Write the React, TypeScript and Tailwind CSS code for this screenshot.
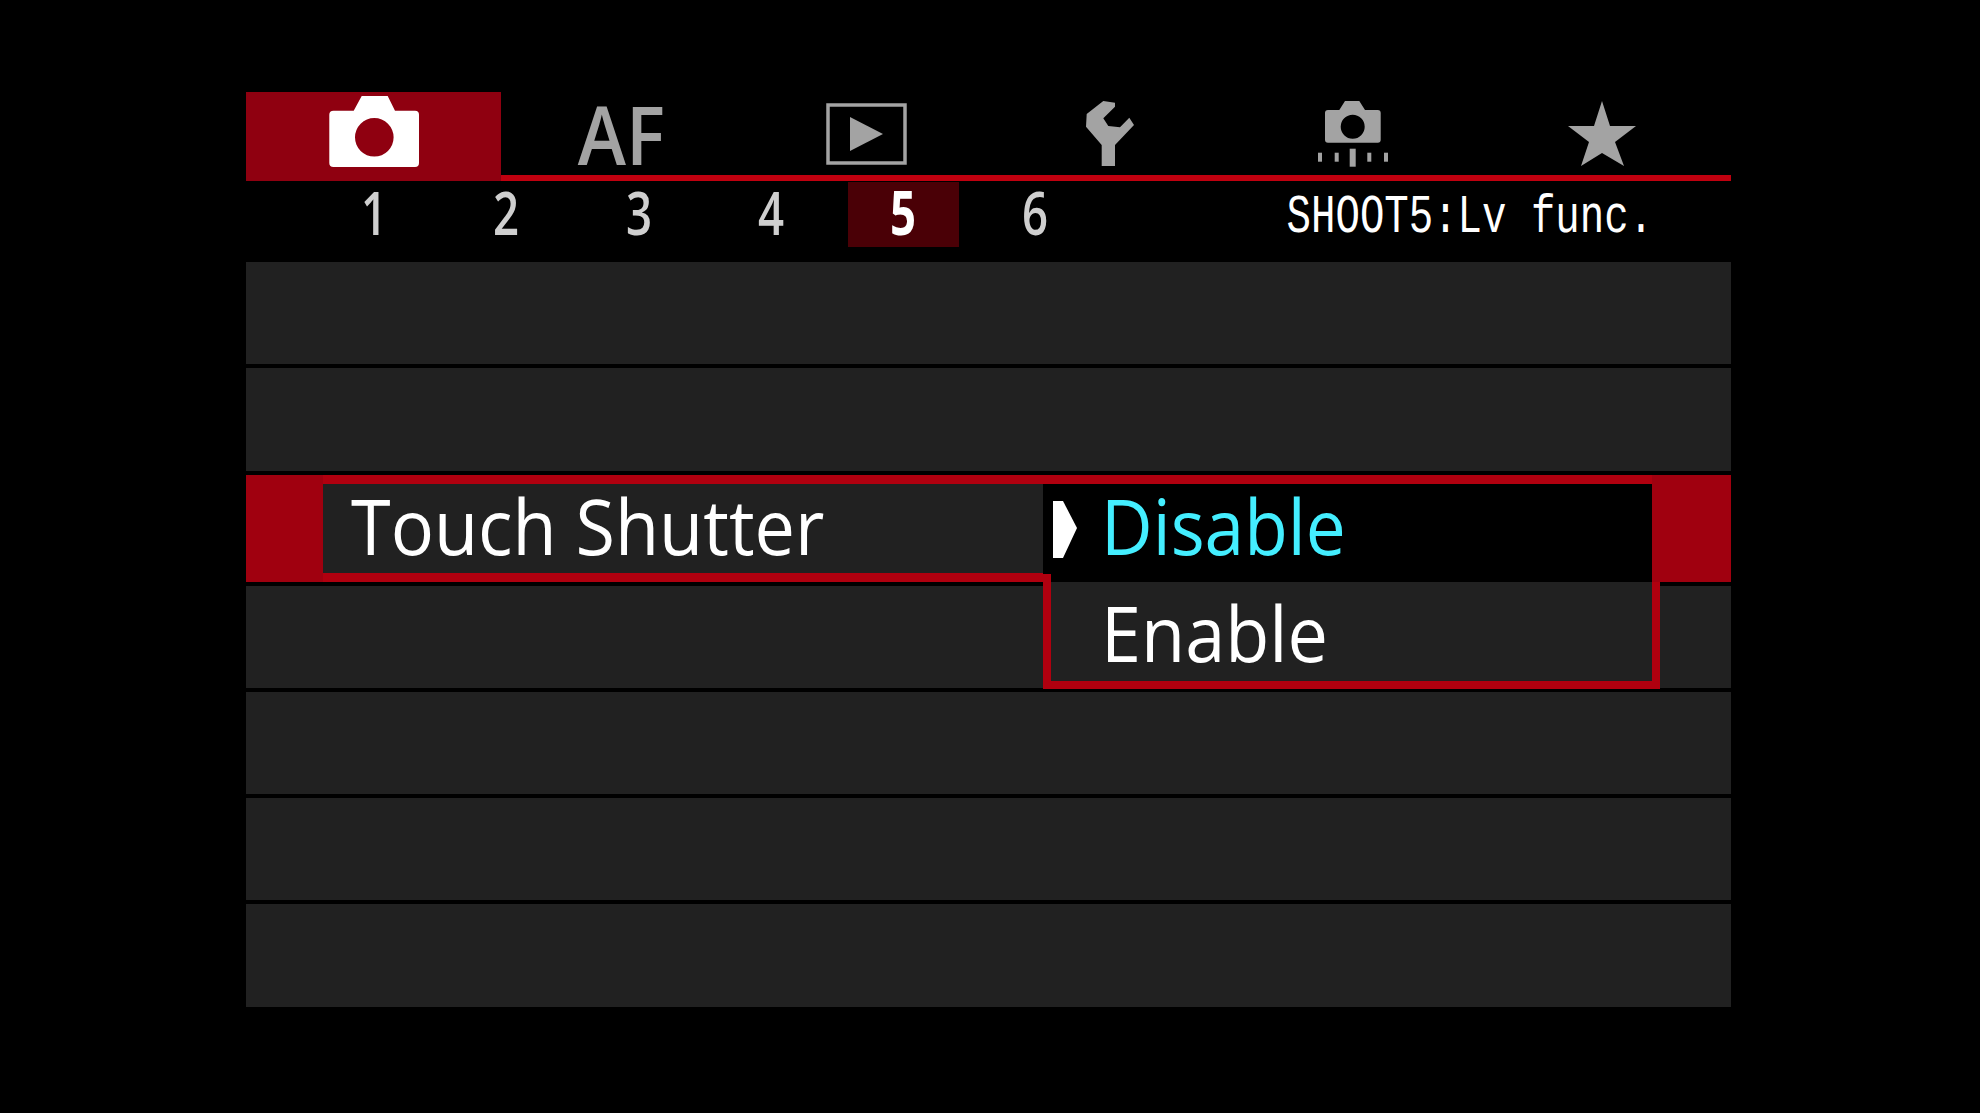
/**
 * Camera menu screen: SHOOT5 live view functions, Touch Shutter dropdown open.
 */
const SANS = "font-['Open_Sans',sans-serif]";

const digits = ['1', '2', '3', '4', '5', '6'];

function CameraIcon() {
  return (
    <svg width="90" height="71" viewBox="8 6 90 71" fill="#ffffff">
      <path
        fillRule="evenodd"
        d="M12.5 20.7H32.7L40.7 6H66.7L74 20.7H94Q98 20.7 98 24.7V73Q98 77 94 77H12.5Q8.3 77 8.3 73V24.7Q8.3 20.7 12.5 20.7ZM53.3 28A19.3 19.3 0 1 0 53.3 66.6A19.3 19.3 0 1 0 53.3 28Z"
      />
    </svg>
  );
}

function PlayIcon() {
  return (
    <svg width="81" height="62" viewBox="0 0 81 62">
      <rect x="2" y="2" width="77" height="58" fill="none" stroke="#a3a3a3" strokeWidth="3.5" />
      <path d="M24 14L57 31L24 48Z" fill="#a3a3a3" />
    </svg>
  );
}

function WrenchIcon() {
  return (
    <svg width="80" height="65" viewBox="0 11 80 65" fill="#a3a3a3">
      <path d="M45 12.7L33.3 11L16.7 24L16 36.7L31.7 55V76H45V55L64 35L59.3 27.7L50 37.3L38.3 36L33.3 28.3L45 16.7Z" />
    </svg>
  );
}

function ShootLiveIcon() {
  return (
    <svg width="70" height="66" viewBox="8 11 70 66" fill="#a3a3a3">
      <path
        fillRule="evenodd"
        d="M18 20H29.3L35 11H49.3L55 20H67.7Q70.7 20 70.7 23V49.7Q70.7 52.7 67.7 52.7H18Q15 52.7 15 49.7V23Q15 20 18 20ZM42.7 24.7A12 12 0 1 0 42.7 48.7A12 12 0 1 0 42.7 24.7Z"
      />
      <rect x="8" y="62.7" width="4" height="9" />
      <rect x="24.7" y="62.7" width="4" height="9" />
      <rect x="39.7" y="58.7" width="6" height="18" />
      <rect x="57.3" y="62.7" width="4" height="9" />
      <rect x="74" y="62.7" width="4" height="9" />
    </svg>
  );
}

function StarIcon() {
  return (
    <svg width="68" height="65" viewBox="0 0 68 65" fill="#a3a3a3">
      <path d="M34 0L42 25H68L47 41L56 65L34 52L13 65L21 41L0 25H26Z" />
    </svg>
  );
}

function TabBar() {
  return (
    <div className="flex">
      <div className="flex h-[89px] w-[255px] items-center justify-center bg-[#8f0010] pb-[10px]">
        <CameraIcon />
      </div>
      <div className="flex h-[89px] w-[240px] items-center justify-center border-b-[6px] border-[#c0000f]">
        <span className={`${SANS} scale-x-[0.9] text-[81px] leading-none font-semibold text-[#a3a3a3]`}>AF</span>
      </div>
      <div className="flex h-[89px] w-[250px] items-center justify-center border-b-[6px] border-[#c0000f]">
        <PlayIcon />
      </div>
      <div className="flex h-[89px] w-[238px] items-center justify-center border-b-[6px] border-[#c0000f]">
        <WrenchIcon />
      </div>
      <div className="flex h-[89px] w-[248px] items-center justify-center border-b-[6px] border-[#c0000f]">
        <ShootLiveIcon />
      </div>
      <div className="flex h-[89px] w-[254px] items-center justify-center border-b-[6px] border-[#c0000f] pr-1">
        <StarIcon />
      </div>
    </div>
  );
}

function SubTabs() {
  return (
    <div className="flex h-[81px] items-start justify-between pr-[78px] pl-[62px]">
      <div className="mt-px flex">
        {digits.map((d) => (
          <div key={d} className="flex h-[65px] w-[132.3px] justify-center">
            <div
              className={`flex h-[65px] w-[111px] items-center justify-center ${d === '5' ? 'bg-[#4a0006]' : ''}`}
            >
              <span
                className={`${SANS} mb-[5px] scale-x-[0.76] text-[60px] leading-none ${
                  d === '5' ? 'font-bold text-white' : 'font-semibold text-[#cfcfcf]'
                }`}
              >
                {d}
              </span>
            </div>
          </div>
        ))}
      </div>
      <span className="mt-[4px] origin-right scale-x-[0.754] font-['Liberation_Mono',monospace] text-[54px] leading-[65px] whitespace-nowrap text-white">
        SHOOT5:Lv func.
      </span>
    </div>
  );
}

function EmptyRow() {
  return <div className="h-[102.25px] bg-[#212121]" />;
}

function TouchShutterRow() {
  return (
    <div className="relative flex h-[107px] bg-[#b0000f]">
      <div className="w-[77px] bg-[#a0000f]" />
      <div className="my-[9px] flex w-[720px] items-center bg-[#212121] pb-[6px] pl-[28px]">
        <span
          className={`${SANS} origin-left scale-x-[0.935] text-[77px] leading-none font-medium whitespace-nowrap text-white`}
        >
          Touch Shutter
        </span>
      </div>
      <div className="mt-[9px] flex h-[100px] w-[609px] items-center bg-black pl-[10px]">
        <svg width="24" height="57" viewBox="0 0 24 57" fill="#ffffff" className="mb-[8px]">
          <path d="M0 0H10L24 27L10 57H0Z" />
        </svg>
        <span
          className={`${SANS} mb-[16px] ml-[24px] origin-left scale-x-[0.925] text-[77px] leading-none font-medium text-[#44eeff]`}
        >
          Disable
        </span>
      </div>
      <div className="flex-1 bg-[#a0000f]" />

      {/* Dropdown's second option hangs over the row below */}
      <div className="absolute top-[107px] left-[797px] flex h-[107px] w-[617px] items-center border-x-[8px] border-b-[8px] border-[#b0000f] bg-[#212121] pl-[50px]">
        <span
          className={`${SANS} mt-[3px] origin-left scale-x-[0.935] text-[77px] leading-none font-medium text-white`}
        >
          Enable
        </span>
      </div>
      <div className="absolute top-[99px] left-[797px] h-[8px] w-[8px] bg-[#b0000f]" />
    </div>
  );
}

export default function App() {
  return (
    <div className="min-h-screen bg-black pt-[92px] pl-[246px]">
      <div className="w-[1485px]">
        <TabBar />
        <SubTabs />
        <div className="flex flex-col gap-[4px]">
          <EmptyRow />
          <EmptyRow />
          <TouchShutterRow />
          <EmptyRow />
          <EmptyRow />
          <EmptyRow />
          <EmptyRow />
        </div>
      </div>
    </div>
  );
}
